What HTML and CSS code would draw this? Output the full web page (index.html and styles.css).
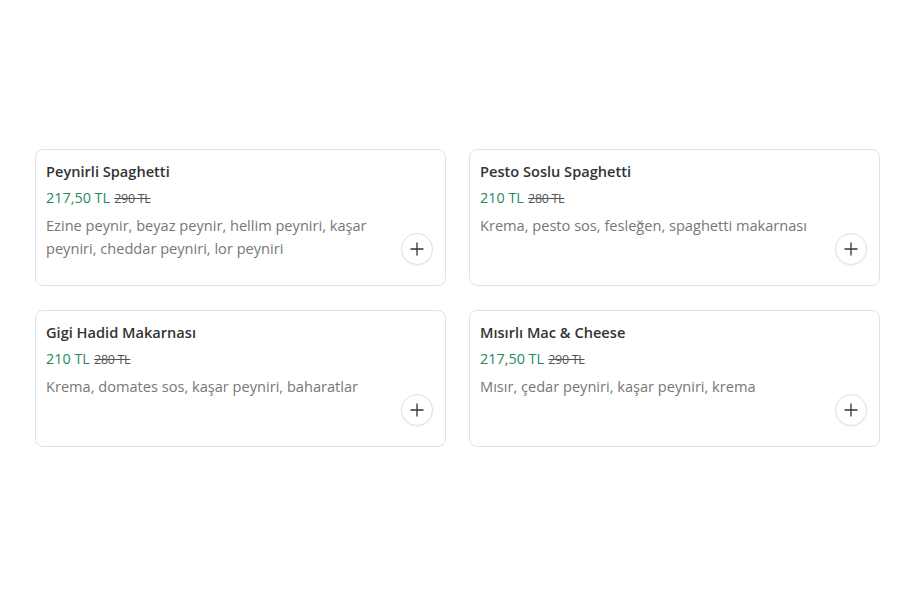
FILE: index.html
```html
<!DOCTYPE html>
<html lang="tr">
<head>
<meta charset="utf-8">
<title>Menü</title>
<link rel="stylesheet" href="styles.css">
</head>
<body>
<main class="page">
  <section class="grid">
    <article class="card">
      <h3 class="title">Peynirli Spaghetti</h3>
      <p class="price"><span class="now">217,50 TL</span> <s class="old">290 TL</s></p>
      <p class="desc">Ezine peynir, beyaz peynir, hellim peyniri, kaşar peyniri, cheddar peyniri, lor peyniri</p>
      <button class="add" aria-label="Ekle"><svg viewBox="0 0 16 16" width="16" height="16"><path d="M8 1.5v13M1.5 8h13" stroke="#333" stroke-width="1.3" fill="none"/></svg></button>
    </article>
    <article class="card">
      <h3 class="title">Pesto Soslu Spaghetti</h3>
      <p class="price"><span class="now">210 TL</span> <s class="old">280 TL</s></p>
      <p class="desc">Krema, pesto sos, fesleğen, spaghetti makarnası</p>
      <button class="add" aria-label="Ekle"><svg viewBox="0 0 16 16" width="16" height="16"><path d="M8 1.5v13M1.5 8h13" stroke="#333" stroke-width="1.3" fill="none"/></svg></button>
    </article>
    <article class="card">
      <h3 class="title">Gigi Hadid Makarnası</h3>
      <p class="price"><span class="now">210 TL</span> <s class="old">280 TL</s></p>
      <p class="desc">Krema, domates sos, kaşar peyniri, baharatlar</p>
      <button class="add" aria-label="Ekle"><svg viewBox="0 0 16 16" width="16" height="16"><path d="M8 1.5v13M1.5 8h13" stroke="#333" stroke-width="1.3" fill="none"/></svg></button>
    </article>
    <article class="card">
      <h3 class="title">Mısırlı Mac &amp; Cheese</h3>
      <p class="price"><span class="now">217,50 TL</span> <s class="old">290 TL</s></p>
      <p class="desc">Mısır, çedar peyniri, kaşar peyniri, krema</p>
      <button class="add" aria-label="Ekle"><svg viewBox="0 0 16 16" width="16" height="16"><path d="M8 1.5v13M1.5 8h13" stroke="#333" stroke-width="1.3" fill="none"/></svg></button>
    </article>
  </section>
</main>
</body>
</html>
```
FILE: styles.css
```css
html, body {
  margin: 0;
  padding: 0;
  background: #fff;
  font-family: "Open Sans", "Noto Sans", sans-serif;
}
.page {
  padding: 149px 20px 0 35px;
}
.grid {
  display: grid;
  grid-template-columns: 411px 411px;
  column-gap: 23px;
  row-gap: 24px;
}
.card {
  position: relative;
  box-sizing: border-box;
  height: 137px;
  border: 1px solid #e2e2e2;
  border-radius: 8px;
  padding: 11px 12px 0 10px;
  background: #fff;
}
.title {
  margin: 0;
  font-size: 14.6px;
  font-weight: 600;
  line-height: 20px;
  color: #333;
}
.price {
  margin: 6px 0 0;
  line-height: 20px;
}
.now {
  font-size: 14.4px;
  color: #1f8a5e;
}
.old {
  font-size: 12.5px;
  color: #555;
  letter-spacing: -0.3px;
}
.desc {
  margin: 5px 0 0;
  font-size: 14.6px;
  line-height: 23px;
  color: #777;
  padding-right: 30px;
}
.add {
  position: absolute;
  right: 12px;
  bottom: 20px;
  width: 32px;
  height: 32px;
  border-radius: 50%;
  border: 1px solid #e0e0e0;
  background: #fff;
  padding: 0;
  display: flex;
  align-items: center;
  justify-content: center;
  box-shadow: 0 1px 2px rgba(0,0,0,0.05);
}
```
